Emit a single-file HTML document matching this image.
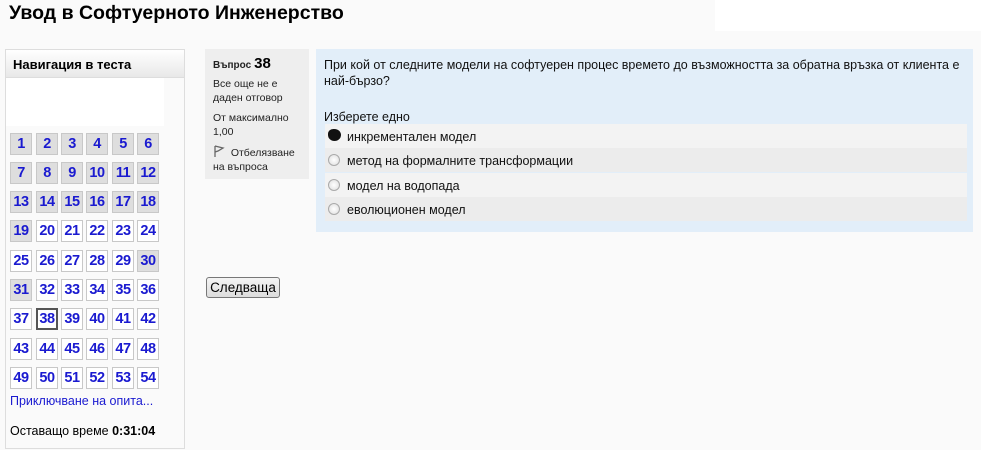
<!DOCTYPE html>
<html><head><meta charset="utf-8"><style>
*{margin:0;padding:0;box-sizing:border-box}
body{width:981px;height:450px;background:#fafafa;font-family:"Liberation Sans",Arial,sans-serif;position:relative;overflow:hidden;color:#000}
.a{position:absolute}
h1{position:absolute;left:9px;top:2px;font-size:19.5px;font-weight:bold;white-space:nowrap}
.topw{left:715px;top:0;width:266px;height:31px;background:#fff}
.nav{left:5px;top:49px;width:180px;height:400px;border:1px solid #ddd;background:#fafafa}
.navh{left:0;top:0;width:178px;height:28px;background:linear-gradient(#fff,#e8e8e8);font-weight:bold;font-size:13px;padding:7px 0 0 7px;border-bottom:1px solid #ddd}
.navw{left:0;top:28px;width:158px;height:48px;background:#fff}
.c{position:absolute;width:22px;height:22px;border:1px solid #c8c8c8;background:#fff;color:#1a1ad0;font-weight:bold;font-size:14.5px;text-align:center;line-height:20px;letter-spacing:-0.5px}
.g{background:#dedede}
.cur{border:2px solid #555;line-height:18px}
.info{left:205px;top:49px;width:104px;height:130px;background:#eee;font-size:10.5px;color:#222;padding:8px 8px;line-height:14px}
.q{left:316px;top:49px;width:657px;height:183px;background:#e2eef9;font-size:12.5px;color:#111}
.opt{position:absolute;left:9px;width:642px;height:24px;font-size:12.5px;padding:6px 0 0 22px}
.rad{position:absolute;left:3px;top:6px;width:12px;height:12px;border-radius:50%;border:1px solid #aaa;background:radial-gradient(#fff,#ddd)}
.btn{left:206px;top:277px;width:74px;height:21px;border:1px solid #777;border-radius:3px;background:linear-gradient(#f4f4f4,#dcdcdc);font-size:13.5px;text-align:center;line-height:19px}
</style></head><body>
<div class="a topw"></div>
<h1>Увод в Софтуерното Инженерство</h1>
<div class="a nav">
 <div class="a navh">Навигация в теста</div>
 <div class="a navw"></div>
</div>
<div id="grid"></div>
<div class="a" style="left:10px;top:394px;font-size:12.5px;color:#1a1ad0">Приключване на опита...</div>
<div class="a" style="left:10px;top:424px;font-size:12.5px">Оставащо време <b>0:31:04</b></div>

<div class="a info"><div><b style="font-size:10px">Въпрос</b> <b style="font-size:15px;color:#000">38</b></div>
<div style="margin-top:4px">Все още не е даден отговор</div>
<div style="margin-top:6px">От максимално 1,00</div>
<div style="margin-top:6px"><svg width="12" height="12" viewBox="0 0 12 12" style="vertical-align:-1px"><path d="M2 1V12M2 1L10 3L5 6L2 7" stroke="#666" stroke-width="1.3" fill="none"/></svg> &nbsp;Отбелязване на въпроса</div>
</div>

<div class="a q">
 <div style="position:absolute;left:8px;top:8px;width:645px;line-height:16px">При кой от следните модели на софтуерен процес времето до възможността за обратна връзка от клиента е най-бързо?</div>
 <div style="position:absolute;left:8px;top:61px">Изберете едно</div>
 <div class="opt" style="top:75px;background:#f3f3f3"><div style="position:absolute;left:3px;top:5px;width:13px;height:12px;background:#111;border-radius:40% 50% 50% 50%"></div>инкрементален модел</div>
 <div class="opt" style="top:99px;background:#ececec"><div class="rad"></div>метод на формалните трансформации</div>
 <div class="opt" style="top:124px;background:#f3f3f3"><div class="rad"></div>модел на водопада</div>
 <div class="opt" style="top:148px;background:#ececec"><div class="rad"></div>еволюционен модел</div>
</div>
<div class="a btn">Следваща</div>
<script>
var xs=[10,36,61,86,112,137],ys=[133,162,191,220,250,279,308,338,367],h='';
for(var i=0;i<54;i++){var n=i+1,x=xs[i%6],y=ys[Math.floor(i/6)];
var cl='c'+((n<=19||n==30||n==31)?' g':'')+(n==38?' cur':'');
h+='<div class="'+cl+'" style="left:'+x+'px;top:'+y+'px">'+n+'</div>';}
document.getElementById('grid').innerHTML=h;
</script>
</body></html>
